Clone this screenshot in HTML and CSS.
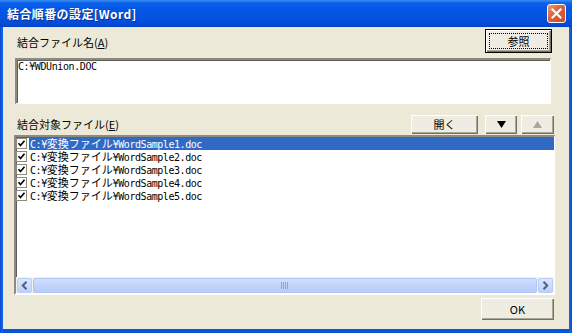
FILE: index.html
```html
<!DOCTYPE html>
<html lang="ja">
<head>
<meta charset="utf-8">
<title>結合順番の設定[Word]</title>
<link rel="stylesheet" href="styles.css">
</head>
<body>
<div class="window">
  <div class="titlebar">
    <span class="title">結合順番の設定[Word]</span>
    <span class="close">
      <svg width="11" height="11" viewBox="0 0 11 11"><path d="M1.5 1.5 L9.5 9.5 M9.5 1.5 L1.5 9.5" stroke="#fff" stroke-width="2.2" stroke-linecap="square"/></svg>
    </span>
  </div>
  <div class="client">
    <div class="row row1">
      <label class="lbl">結合ファイル名(<u>A</u>)</label>
      <button class="btn btn-default btn-ref"><span class="focus">参照</span></button>
    </div>
    <div class="edit">C:¥WDUnion.DOC</div>
    <div class="row row2">
      <label class="lbl">結合対象ファイル(<u>E</u>)</label>
      <div class="tools">
        <button class="btn btn-open">開く</button>
        <button class="btn btn-arrow btn-down"><svg width="9" height="7" viewBox="0 0 9 7"><polygon points="0,0 9,0 4.5,7" fill="#000"/></svg></button>
        <button class="btn btn-arrow btn-up"><svg width="9" height="7" viewBox="0 0 9 7"><polygon points="0,7 9,7 4.5,0" fill="#ACA899"/></svg></button>
      </div>
    </div>
    <div class="list">
      <div class="items">
        <div class="item sel"><span class="chk"><svg width="11" height="11" viewBox="0 0 11 11"><rect x="0.5" y="0.5" width="10" height="10" fill="#fff" stroke="#8d8b80"/><path d="M2.5 5.2 L4.5 7.5 L8.5 2.8" fill="none" stroke="#000" stroke-width="1.6"/></svg></span><span class="txt">C:¥<span class="jp">変換ファイル</span>¥WordSample1.doc</span></div>
        <div class="item"><span class="chk"><svg width="11" height="11" viewBox="0 0 11 11"><rect x="0.5" y="0.5" width="10" height="10" fill="#fff" stroke="#8d8b80"/><path d="M2.5 5.2 L4.5 7.5 L8.5 2.8" fill="none" stroke="#000" stroke-width="1.6"/></svg></span><span class="txt">C:¥<span class="jp">変換ファイル</span>¥WordSample2.doc</span></div>
        <div class="item"><span class="chk"><svg width="11" height="11" viewBox="0 0 11 11"><rect x="0.5" y="0.5" width="10" height="10" fill="#fff" stroke="#8d8b80"/><path d="M2.5 5.2 L4.5 7.5 L8.5 2.8" fill="none" stroke="#000" stroke-width="1.6"/></svg></span><span class="txt">C:¥<span class="jp">変換ファイル</span>¥WordSample3.doc</span></div>
        <div class="item"><span class="chk"><svg width="11" height="11" viewBox="0 0 11 11"><rect x="0.5" y="0.5" width="10" height="10" fill="#fff" stroke="#8d8b80"/><path d="M2.5 5.2 L4.5 7.5 L8.5 2.8" fill="none" stroke="#000" stroke-width="1.6"/></svg></span><span class="txt">C:¥<span class="jp">変換ファイル</span>¥WordSample4.doc</span></div>
        <div class="item"><span class="chk"><svg width="11" height="11" viewBox="0 0 11 11"><rect x="0.5" y="0.5" width="10" height="10" fill="#fff" stroke="#8d8b80"/><path d="M2.5 5.2 L4.5 7.5 L8.5 2.8" fill="none" stroke="#000" stroke-width="1.6"/></svg></span><span class="txt">C:¥<span class="jp">変換ファイル</span>¥WordSample5.doc</span></div>
      </div>
      <div class="hscroll">
        <span class="sbtn"><svg width="7" height="9" viewBox="0 0 7 9"><path d="M5.5 0.8 L1.8 4.5 L5.5 8.2" fill="none" stroke="#4D6185" stroke-width="2"/></svg></span>
        <span class="thumb"><svg width="8" height="7" viewBox="0 0 8 7"><path d="M0.5 0 V7 M2.5 0 V7 M4.5 0 V7 M6.5 0 V7" stroke="#8DA6E0" stroke-width="1"/></svg></span>
        <span class="sbtn"><svg width="7" height="9" viewBox="0 0 7 9"><path d="M1.5 0.8 L5.2 4.5 L1.5 8.2" fill="none" stroke="#4D6185" stroke-width="2"/></svg></span>
      </div>
    </div>
    <div class="footer">
      <button class="btn btn-ok">OK</button>
    </div>
  </div>
</div>
</body>
</html>
```
FILE: styles.css
```css
html, body {
  margin: 0;
  padding: 0;
  background: #0855DD;
}

.window {
  width: 572px;
  height: 333px;
  display: flex;
  flex-direction: column;
  background: linear-gradient(to right, #0742C8 0, #166AEE 2px, #0855DD 3px, #0855DD 569px, #166AEE 570px, #0742C8 572px);
  overflow: hidden;
}

.titlebar {
  flex: none;
  height: 27px;
  display: flex;
  align-items: center;
  justify-content: space-between;
  padding: 0 6px 0 7px;
  background: linear-gradient(to bottom, #3D8DF5 0, #0A63EA 3px, #0458E6 8px, #0553E0 18px, #0449D2 25px, #0342C6 27px);
}

.title {
  color: #fff;
  font-family: "Noto Sans CJK JP", sans-serif;
  font-weight: bold;
  font-size: 12px;
  letter-spacing: 0.4px;
  line-height: 14px;
  text-shadow: 1px 1px 0 #0A2C8C;
}

.close {
  width: 19px;
  height: 19px;
  box-sizing: border-box;
  border: 1px solid #fff;
  border-radius: 3px;
  background: linear-gradient(135deg, #F09A7E 0%, #E2623D 40%, #CC4A22 100%);
  display: flex;
  align-items: center;
  justify-content: center;
}

.client {
  flex: 1;
  margin: 0 3px 4px 3px;
  background: #ECE9D8;
  padding: 2px 14px 0 11px;
  display: flex;
  flex-direction: column;
  font-family: "Noto Sans CJK JP", sans-serif;
  font-size: 11px;
  color: #000;
}

.row {
  display: flex;
  align-items: center;
  justify-content: space-between;
}

.row1 {
  height: 24px;
}

.row2 {
  margin-top: 10px;
  height: 20px;
}

.lbl {
  margin-left: 3px;
  line-height: 13px;
}

.row1 .lbl {
  margin-top: 3px;
}

.lbl u {
  text-decoration: underline;
  text-underline-offset: 1px;
}

.btn {
  font-family: "Noto Sans CJK JP", sans-serif;
  font-size: 11px;
  color: #000;
  background: #EFEDE3;
  border: none;
  margin: 0;
  padding: 0;
  box-sizing: border-box;
  box-shadow: inset 1px 1px 0 #fff, inset -1px -1px 0 #716F64, inset -2px -2px 0 #ACA899;
  display: flex;
  align-items: center;
  justify-content: center;
  line-height: 13px;
}

.btn-default {
  border: 1px solid #000;
}

.btn-ref {
  width: 67px;
  height: 24px;
  margin-right: 3px;
}

.focus {
  width: 57px;
  height: 14px;
  outline: 1px dotted #000;
  display: flex;
  align-items: center;
  justify-content: center;
}

.edit {
  margin: 5px 4px 0 1px;
  height: 46px;
  box-sizing: border-box;
  background: #fff;
  border-style: solid;
  border-width: 2px 1px 1px 2px;
  border-color: #8E8B7E #fff #fff #8E8B7E;
  box-shadow: inset 1px 1px 0 #5F5D55;
  padding: 1px 0 0 1px;
  font-family: "DejaVu Sans Mono", "Noto Sans CJK JP", monospace;
  font-size: 10px;
  letter-spacing: -0.4px;
  line-height: 12px;
}

.tools {
  display: flex;
  align-items: center;
  margin-right: 1px;
}

.btn-open {
  width: 67px;
  height: 19px;
  margin-right: 7px;
}

.btn-arrow {
  width: 32px;
  height: 19px;
}

.btn-up {
  margin-left: 4px;
  width: 33px;
}

.list {
  margin-top: 1px;
  height: 160px;
  box-sizing: border-box;
  background: #fff;
  border-style: solid;
  border-width: 2px 1px 2px 2px;
  border-color: #8E8B7E #fff #fff #8E8B7E;
  box-shadow: inset 1px 1px 0 #5F5D55;
  display: flex;
  flex-direction: column;
}

.items {
  flex: 1;
  display: flex;
  flex-direction: column;
}

.item {
  height: 13px;
  display: flex;
  align-items: center;
}

.chk {
  width: 11px;
  height: 11px;
  margin-right: 2px;
  display: flex;
}

.txt {
  flex: 1;
  height: 13px;
  padding-left: 1px;
  font-family: "DejaVu Sans Mono", "Noto Sans CJK JP", monospace;
  font-size: 10px;
  letter-spacing: -0.45px;
  line-height: 13px;
  white-space: nowrap;
}

.jp {
  font-family: "Noto Sans CJK JP", sans-serif;
  font-size: 11px;
  letter-spacing: 0;
}

.sel .txt {
  background: #316AC5;
  color: #fff;
}

.hscroll {
  flex: none;
  height: 16px;
  display: flex;
  align-items: center;
  gap: 1px;
  padding: 0 1px 0 1px;
  background: #F4F3EE;
}

.sbtn {
  width: 15px;
  height: 15px;
  box-sizing: border-box;
  border: 1px solid #B9CCF4;
  border-radius: 2px;
  background: linear-gradient(to bottom, #DCE6FD, #BFD0F9);
  display: flex;
  align-items: center;
  justify-content: center;
}

.thumb {
  flex: 1;
  height: 15px;
  box-sizing: border-box;
  border: 1px solid #AFC4F2;
  border-radius: 2px;
  background: linear-gradient(to bottom, #D3E0FD, #C2D3FB 50%, #B9CCF9);
  display: flex;
  align-items: center;
  justify-content: center;
}

.footer {
  display: flex;
  justify-content: flex-end;
  margin-top: 3px;
}

.btn-ok {
  width: 73px;
  height: 22px;
  margin-right: 1px;
}
```
